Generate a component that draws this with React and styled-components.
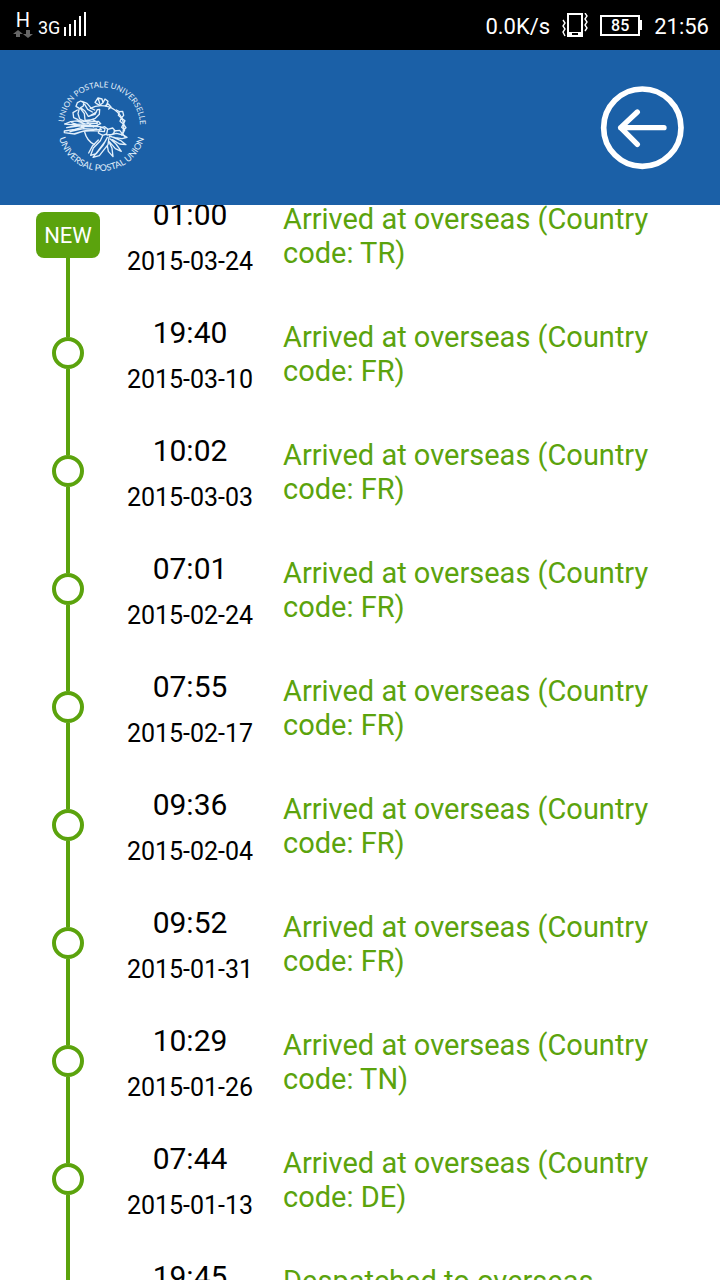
import React from 'react';
import styled, { createGlobalStyle } from 'styled-components';

const colors = {
  green: '#5ba30d',
  blue: '#1b60a7',
  white: '#fff',
  black: '#000',
};

const GlobalStyle = createGlobalStyle`
  * {
    box-sizing: border-box;
  }
  body {
    margin: 0;
    background: ${colors.white};
    font-family: Roboto, 'Liberation Sans', sans-serif;
  }
`;

const Screen = styled.div`
  display: flex;
  flex-direction: column;
  height: 100vh;
  overflow: hidden;
`;

const StatusBar = styled.div`
  display: flex;
  flex: none;
  justify-content: space-between;
  align-items: center;
  height: 50px;
  padding: 0 11px 0 13px;
  background: ${colors.black};
  color: ${colors.white};
`;

const StatusGroup = styled.div`
  display: flex;
  align-items: center;
  gap: ${({ $gap }) => $gap}px;
`;

const StatusText = styled.span`
  font-size: 22px;
  line-height: 28px;
  padding-top: 4px;
`;

const Network = styled.div`
  display: flex;
  flex-direction: column;
  align-items: center;
  padding-bottom: 2px;
  font-size: 20px;
  line-height: 20px;
`;

const Signal = styled.div`
  display: flex;
  align-items: flex-end;
  gap: 4px;
  padding-bottom: 2px;
  font-size: 18px;
  line-height: 16px;
`;

const Battery = styled.div`
  display: flex;
  align-items: center;
  &::after {
    content: '';
    width: 2px;
    height: 10px;
    background: ${colors.white};
  }
`;

const BatteryLevel = styled.span`
  width: 40px;
  height: 21px;
  border: 2px solid ${colors.white};
  font-size: 16px;
  font-weight: 500;
  line-height: 18px;
  text-align: center;
`;

const Header = styled.header`
  display: flex;
  flex: none;
  justify-content: space-between;
  align-items: center;
  height: 155px;
  padding: 0 36px 0 50px;
  background: ${colors.blue};
`;

const BackButton = styled.button`
  display: flex;
  padding: 0;
  border: 0;
  background: none;
  cursor: pointer;
`;

const Content = styled.main`
  flex: 1;
  min-height: 0;
  overflow: hidden;
`;

// the list is scrolled a little, the first event is cut by the header
const Timeline = styled.ol`
  margin: -29px 0 0;
  padding: 0 36px;
  list-style: none;
`;

const Event = styled.li`
  display: flex;
  align-items: center;
  height: 118px;
`;

const Rail = styled.div`
  display: flex;
  flex: none;
  flex-direction: column;
  align-items: center;
  align-self: stretch;
  width: 64px;
`;

const Line = styled.div`
  flex: 1;
  width: 4px;
  background: ${({ $hidden }) => ($hidden ? 'transparent' : colors.green)};
`;

const Node = styled.div`
  width: 32px;
  height: 32px;
  border: 4px solid ${colors.green};
  border-radius: 50%;
`;

const Badge = styled.div`
  width: 64px;
  height: 46px;
  border-radius: 8px;
  background: ${colors.green};
  color: ${colors.white};
  font-size: 22px;
  line-height: 48px;
  text-align: center;
`;

const When = styled.div`
  display: grid;
  flex: none;
  row-gap: 1px;
  width: 180px;
  padding-top: 7px;
  line-height: 46px;
  text-align: center;
`;

const Time = styled.div`
  font-size: 30px;
`;

const Day = styled.div`
  font-size: 25px;
`;

const Description = styled.p`
  flex: 1;
  margin: 0 0 0 3px;
  padding-top: 2px;
  color: ${colors.green};
  font-size: 29px;
  line-height: 34px;
`;

const events = [
  { time: '01:00', date: '2015-03-24', text: 'Arrived at overseas (Country code: TR)' },
  { time: '19:40', date: '2015-03-10', text: 'Arrived at overseas (Country code: FR)' },
  { time: '10:02', date: '2015-03-03', text: 'Arrived at overseas (Country code: FR)' },
  { time: '07:01', date: '2015-02-24', text: 'Arrived at overseas (Country code: FR)' },
  { time: '07:55', date: '2015-02-17', text: 'Arrived at overseas (Country code: FR)' },
  { time: '09:36', date: '2015-02-04', text: 'Arrived at overseas (Country code: FR)' },
  { time: '09:52', date: '2015-01-31', text: 'Arrived at overseas (Country code: FR)' },
  { time: '10:29', date: '2015-01-26', text: 'Arrived at overseas (Country code: TN)' },
  { time: '07:44', date: '2015-01-13', text: 'Arrived at overseas (Country code: DE)' },
  { time: '19:45', date: '2015-01-09', text: 'Despatched to overseas (Country code: DE)' },
];

const DataArrows = () => (
  <svg width="20" height="8" viewBox="0 0 20 8" fill="#666">
    <path d="M5 0l5 4H7v3H3V4H0zM15 8l-5-4h3V0h4v4h3z" />
  </svg>
);

const SignalBars = () => (
  <svg width="23" height="24" viewBox="0 0 23 24" fill="#fff">
    <path d="M0 15h2v9H0zM5 12h2v12H5zM10 8h2v16h-2zM15 4h2v20h-2zM20 0h2v24h-2z" />
  </svg>
);

const VibrateIcon = () => (
  <svg width="26" height="24" viewBox="0 0 26 24" fill="none" stroke="#fff">
    <path
      d="M5 0h16v24H5zM7 2v17h12V2zM10 20v2h6v-2z"
      fill="#fff"
      fillRule="evenodd"
      stroke="none"
    />
    <path d="M1 7l2 3-2 3 2 3-2 3 2 4M23 0l2 3-2 3 2 3-2 3 2 3-2 3" strokeWidth="1.4" />
  </svg>
);

const BackIcon = () => (
  <svg width="84" height="84" viewBox="0 0 252 252" fill="none" stroke="#fff">
    <circle cx="127" cy="125" r="116" strokeWidth="17" />
    <path
      d="M112 78L62 125l50 50M62 125h130"
      strokeWidth="16"
      strokeLinecap="round"
      strokeLinejoin="round"
    />
  </svg>
);

const UpuLogo = () => (
  <svg width="104" height="104" viewBox="0 0 312 312" fill="none" stroke="#e3f0fb">
    <defs>
      <path id="upu-top" d="M42 154A114 114 0 1 1 269 162" />
      <path id="upu-bottom" d="M23 153A132 132 0 0 0 287 153" />
    </defs>
    <g fill="#e3f0fb" stroke="none" fontFamily="Lato, sans-serif" textAnchor="middle">
      <text fontSize="24">
        <textPath href="#upu-top" startOffset="50%">UNION POSTALE UNIVERSELLE</textPath>
      </text>
      <text fontSize="27">
        <textPath href="#upu-bottom" startOffset="50%">UNIVERSAL POSTAL UNION</textPath>
      </text>
    </g>
    <g
      strokeWidth="4"
      strokeLinejoin="round"
      strokeLinecap="round"
      transform="translate(0 -3)"
    >
      {/* globe */}
      <path d="M121 100C146 86 181 91 202 111C222 131 226 155 216 181M104 171C108 188 118 201 133 209" />
      {/* messengers around it */}
      <path d="M135 82l9-13 12 3 3 11-10 8-9-5zM144 69l5 16M159 83l6-11 9 7-5 13M166 92l9-5 8 9-7 6M199 105l9 5-3 11 9 8-4 10 10 8-5 10 9 8-6 12 7 9M208 110l10-1 3 12-7 8M214 129l11 8-5 10M220 147l8 11-8 7" />
      {/* winged figure */}
      <path d="M78 94l4-11 10-5 9 5-1 10-8 5 13 10 10 16 20-6 7-14 7-1-1 15-12 12-23 8M78 94l10 6-4 16 5 16 15 7M91 100l12 16 2 18M82 105l-13 8 2 15 13 6M96 79l15 6 13 15 10 5M104 88l9 15 14 8M117 124l22-13M105 136l23-2 14 8" />
      {/* wing and clouds */}
      <path d="M44 147l18-7 25-3 28 4 30-2 7 7-14 6-37-1-51 7M44 147l20 2 78-4M50 158l26-6 67 1M43 168l31-5 34-9 42 1 15 6-2 9-32-3-33 2-24 8-31-4zM60 170l40-9 54 3M74 176l28-8 38-6M82 138l20 7M65 143l37 14M112 143l18 13" />
      {/* lower figure with leaves */}
      <path d="M145 174l6-15 13-4 9 7-3 15-12 4zM159 180l-8 17-21 22-8 22 17-5 20-25 13-24M145 195l-17 17-12 22M165 200l-21 28-15 19 19-5 26-33 3-22M173 163l15-4 8 9-9 10-16 2M180 180l19-5 21 5 11 7-15 4-20-3-18-4M184 185l27 11 17 13-19-2-22-13M181 192l17 15 16 22-18-8-18-21M177 201l9 19 3 25-14-16-3-17M192 168l17-2 7 9" />
    </g>
  </svg>
);

const App = () => (
  <>
    <GlobalStyle />
    <Screen>
      <StatusBar>
        <StatusGroup $gap={5}>
          <Network>
            H
            <DataArrows />
          </Network>
          <Signal>
            3G
            <SignalBars />
          </Signal>
        </StatusGroup>
        <StatusGroup $gap={12}>
          <StatusText>0.0K/s</StatusText>
          <VibrateIcon />
          <Battery>
            <BatteryLevel>85</BatteryLevel>
          </Battery>
          <StatusText>21:56</StatusText>
        </StatusGroup>
      </StatusBar>
      <Header>
        <UpuLogo />
        <BackButton type="button" aria-label="Back">
          <BackIcon />
        </BackButton>
      </Header>
      <Content>
        <Timeline>
          {events.map((event, index) => (
            <Event key={event.date}>
              <Rail>
                <Line $hidden={index === 0} />
                {index === 0 ? <Badge>NEW</Badge> : <Node />}
                <Line />
              </Rail>
              <When>
                <Time>{event.time}</Time>
                <Day>{event.date}</Day>
              </When>
              <Description>{event.text}</Description>
            </Event>
          ))}
        </Timeline>
      </Content>
    </Screen>
  </>
);

export default App;
